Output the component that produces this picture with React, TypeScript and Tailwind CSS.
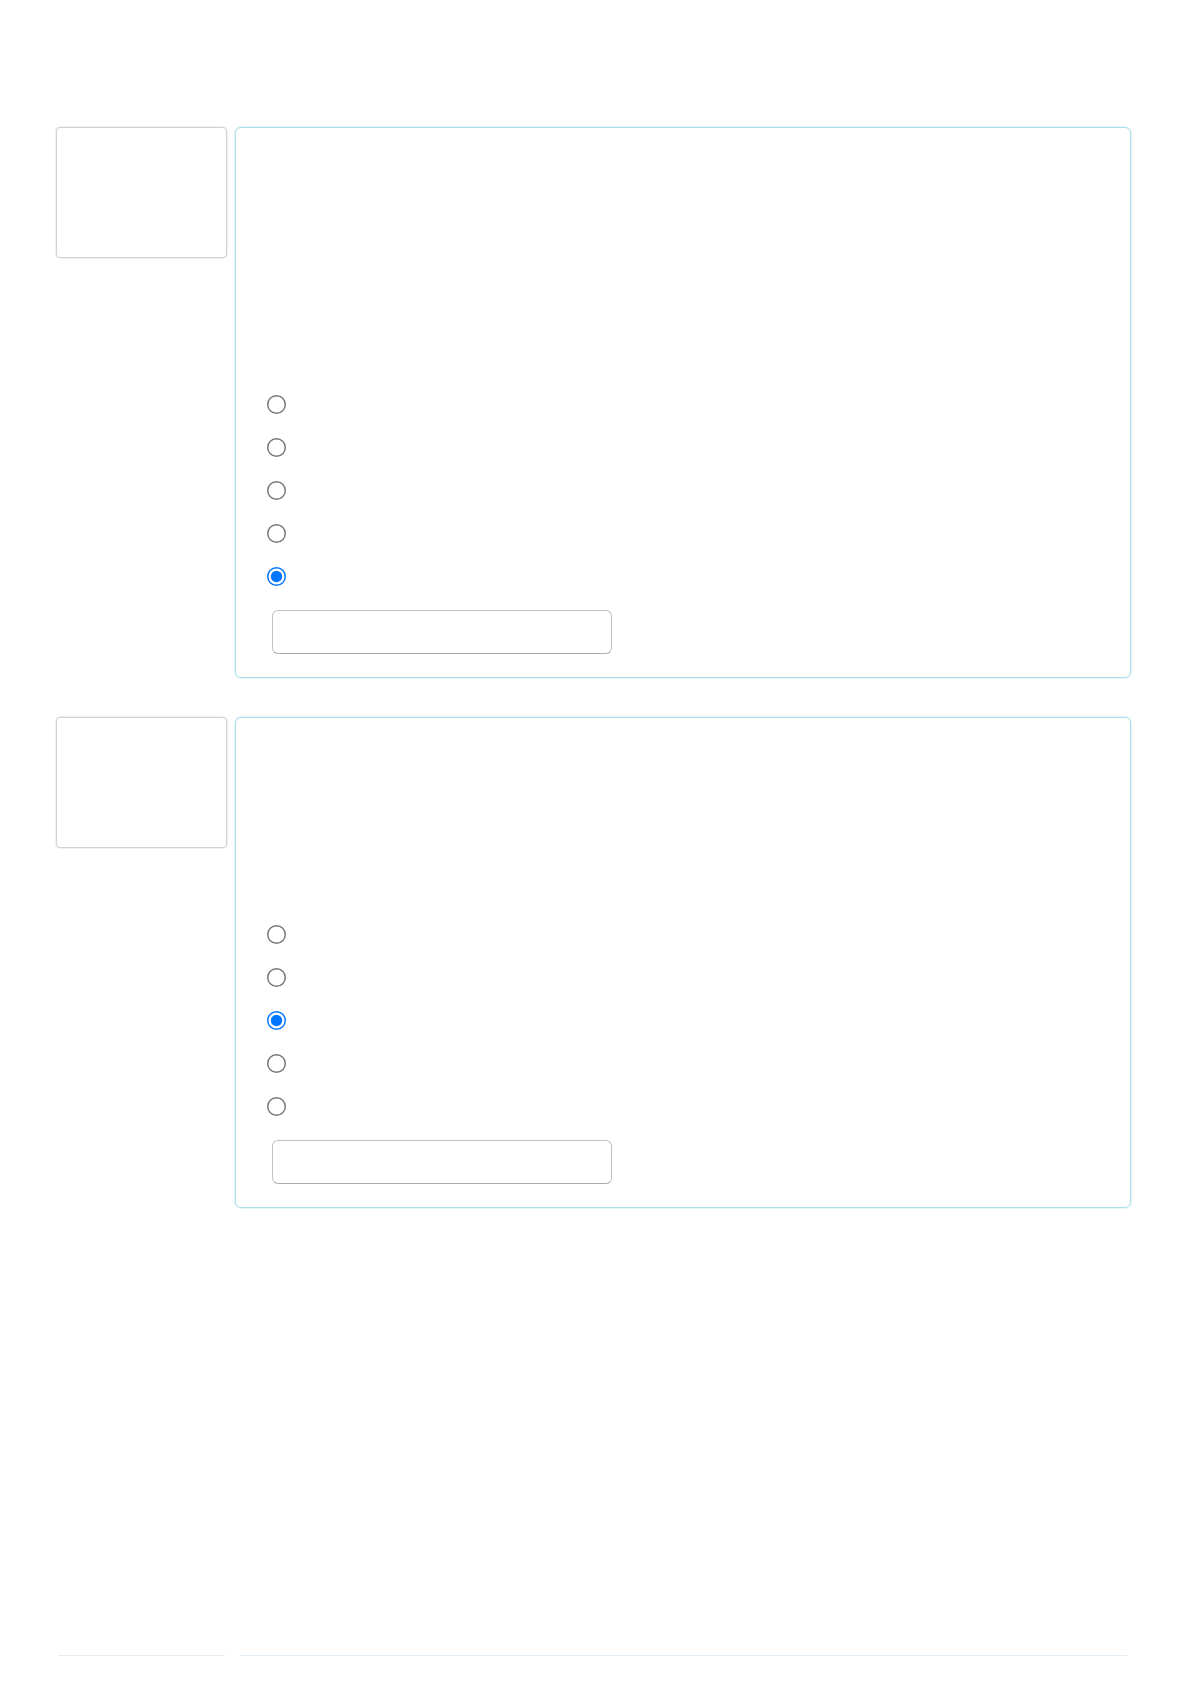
const questions = [
  { name: "q1", lead: "h-[255px]", checked: 4 },
  { name: "q2", lead: "h-[195px]", checked: 2 }
];

function Question({ name, lead, checked }: { name: string; lead: string; checked: number }) {
  return (
    <section className="flex items-start gap-2">
      <div className="h-[131px] w-[171px] shrink-0 rounded border border-[#d2d2d2] bg-white shadow-[0_0_0_1px_#f1f1f1]" />
      <div className="flex-1 rounded-md border border-[#ade0eb] bg-white pb-[23px] shadow-[0_0_0_1px_#e6f5f9]">
        <div className={lead} />
        <ul className="flex flex-col">
          {[0, 1, 2, 3, 4].map((i) => (
            <li key={i} className="flex h-[43px] items-center pl-[34px]">
              <input
                type="radio"
                name={name}
                defaultChecked={i === checked}
                className="m-0 h-[13px] w-[13px] scale-[1.46]"
              />
            </li>
          ))}
        </ul>
        <input
          type="text"
          aria-label="Other"
          className="ml-[36px] mt-3 block h-[44px] w-[340px] rounded-md border border-[#c2c2c2] border-b-[#acacac] bg-white px-3 text-base outline-none"
        />
      </div>
    </section>
  );
}

export default function App() {
  return (
    <div className="min-h-screen bg-white font-['Liberation_Sans',Arial,sans-serif] text-[#333]">
      <main className="flex flex-col gap-[39px] pl-[56px] pr-[57px] pt-[127px]">
        {questions.map((q) => (
          <Question key={q.name} {...q} />
        ))}
      </main>
      <div className="mt-[447px] flex gap-[15px] pl-[58px] pr-[61px]">
        <div className="h-px w-[167px] bg-[#ebebeb]" />
        <div className="h-px flex-1 bg-[#e4eef6]" />
      </div>
    </div>
  );
}
